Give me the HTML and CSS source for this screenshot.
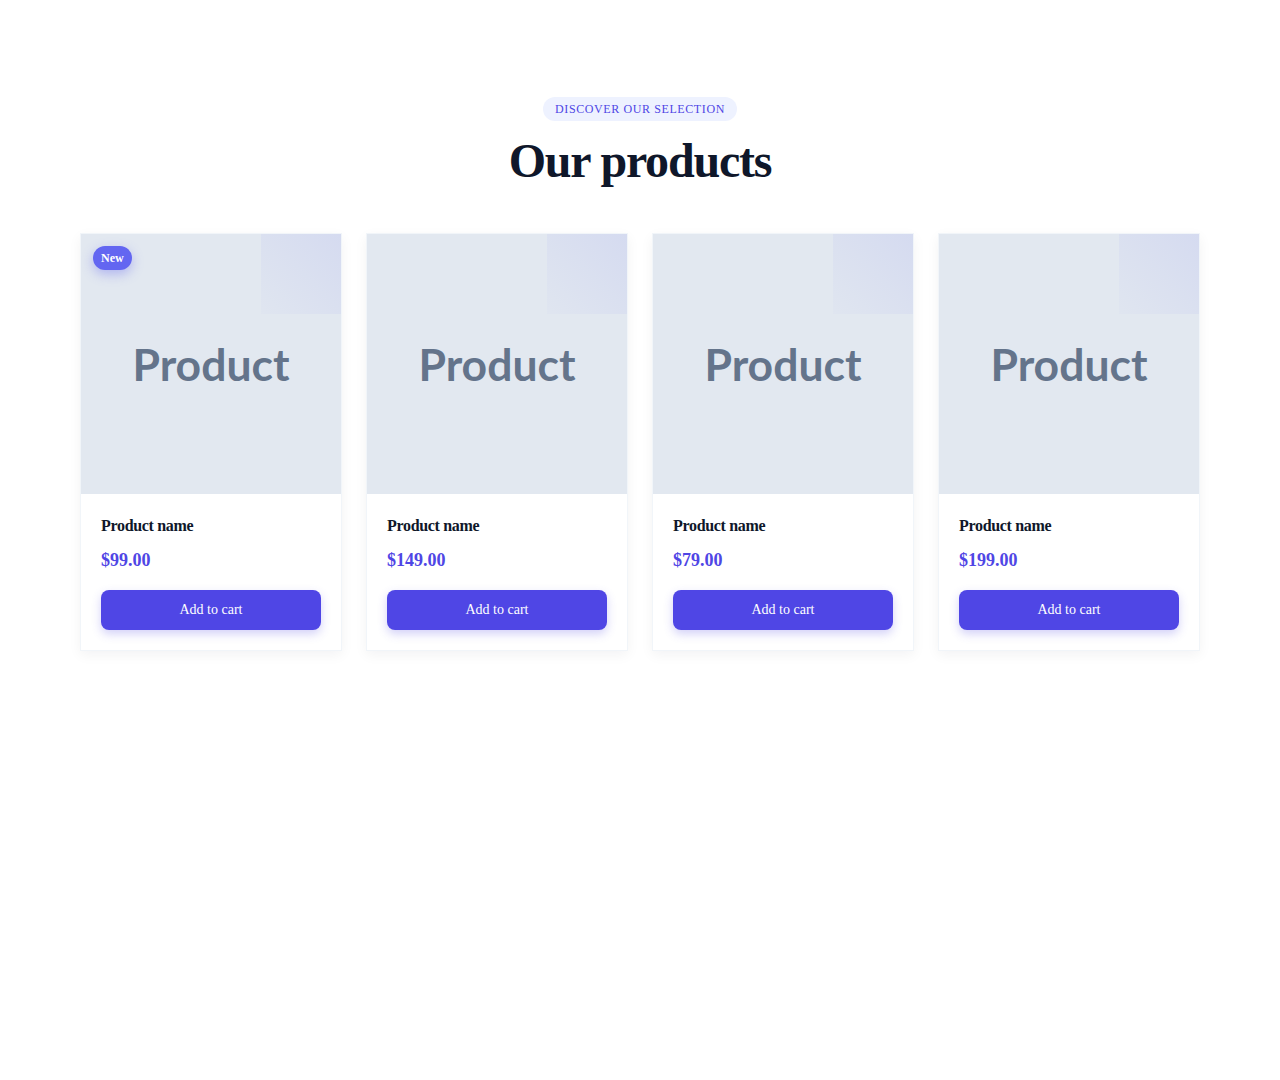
FILE: index.html
```html
<!DOCTYPE html>
<html lang="en">
<head>
  <meta charset="UTF-8" />
  <meta name="viewport" content="width=device-width, initial-scale=1.0"/>
  <title>Our products</title>
  <link rel="stylesheet" href="styles.css">
</head>
<body>
  <section class="products">
    <header class="products-head">
      <span class="eyebrow">Discover our selection</span>
      <h1>Our products</h1>
    </header>

    <div class="grid">
      <div class="card">
        <div class="thumb">
          <span class="badge">New</span>
          <span class="thumb-label">Product</span>
        </div>
        <div class="card-body">
          <h3>Product name</h3>
          <p class="price">$99.00</p>
          <button class="add">Add to cart</button>
        </div>
      </div>

      <div class="card">
        <div class="thumb">
          <span class="thumb-label">Product</span>
        </div>
        <div class="card-body">
          <h3>Product name</h3>
          <p class="price">$149.00</p>
          <button class="add">Add to cart</button>
        </div>
      </div>

      <div class="card">
        <div class="thumb">
          <span class="thumb-label">Product</span>
        </div>
        <div class="card-body">
          <h3>Product name</h3>
          <p class="price">$79.00</p>
          <button class="add">Add to cart</button>
        </div>
      </div>

      <div class="card">
        <div class="thumb">
          <span class="thumb-label">Product</span>
        </div>
        <div class="card-body">
          <h3>Product name</h3>
          <p class="price">$199.00</p>
          <button class="add">Add to cart</button>
        </div>
      </div>
    </div>
  </section>
</body>
</html>
```

FILE: styles.css
```css
body {
  margin: 0;
  font-family: 'Liberation Serif', 'Times New Roman', serif;
  background-color: #fff;
  color: #0f172a;
}
.products {
  max-width: 1120px;
  margin: 0 auto;
  padding: 97px 0 64px;
}
.products-head {
  display: flex;
  flex-direction: column;
  align-items: center;
}
.eyebrow {
  display: inline-block;
  background-color: #eef2ff;
  color: #4f46e5;
  font-size: 12px;
  line-height: 24px;
  letter-spacing: 0.05em;
  text-transform: uppercase;
  padding: 0 12px;
  border-radius: 999px;
}
h1 {
  margin: 12px 0 0;
  font-size: 48px;
  line-height: 56px;
  font-weight: bold;
  letter-spacing: -0.025em;
  color: #0f172a;
}
.grid {
  display: grid;
  grid-template-columns: repeat(4, 1fr);
  gap: 24px;
  margin-top: 44px;
}
.card {
  background-color: #fff;
  border: 1px solid #f1f5f9;
  box-shadow: 0 4px 12px rgba(15, 23, 42, 0.05);
  overflow: hidden;
}
.thumb {
  position: relative;
  height: 260px;
  background-color: #e2e8f0;
  display: flex;
  align-items: center;
  justify-content: center;
}
/* soft corner tint in the top right of each image */
.thumb::after {
  content: '';
  position: absolute;
  top: 0;
  right: 0;
  width: 80px;
  height: 80px;
  background: linear-gradient(225deg, rgba(99, 102, 241, 0.1), rgba(99, 102, 241, 0.02));
}
.thumb-label {
  font-family: Lato, 'Noto Sans', sans-serif;
  font-weight: bold;
  font-size: 44.5px;
  color: #64748b;
  margin-bottom: 2px;
}
.badge {
  position: absolute;
  top: 12px;
  left: 12px;
  background-color: #6366f1;
  color: #fff;
  font-size: 12px;
  font-weight: bold;
  line-height: 24px;
  padding: 0 8px;
  border-radius: 999px;
  box-shadow: 0 4px 12px rgba(99, 102, 241, 0.4);
  z-index: 1;
}
.card-body {
  padding: 20px;
}
.card-body h3 {
  margin: 0;
  font-size: 16px;
  line-height: 24px;
  font-weight: bold;
  letter-spacing: -0.02em;
  color: #0f172a;
}
.price {
  margin: 8px 0 0;
  font-size: 18px;
  line-height: 28px;
  font-weight: bold;
  color: #4f46e5;
}
.add {
  display: block;
  width: 100%;
  height: 40px;
  margin-top: 16px;
  border: none;
  border-radius: 8px;
  background-color: #4f46e5;
  color: #fff;
  font-family: 'Liberation Serif', 'Times New Roman', serif;
  font-size: 14px;
  cursor: pointer;
  box-shadow: 0 4px 10px rgba(79, 70, 229, 0.25);
}
```
